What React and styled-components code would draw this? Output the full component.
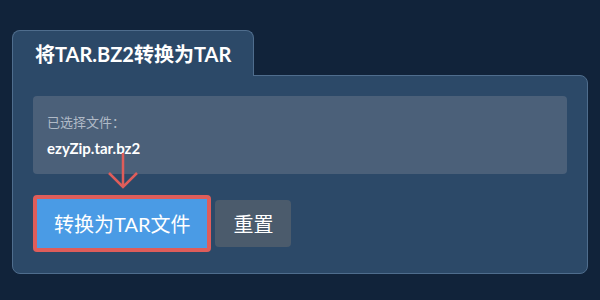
import styled, { createGlobalStyle } from 'styled-components';

const GlobalStyle = createGlobalStyle`
  html, body {
    margin: 0;
    padding: 0;
    background: #11233a;
  }
  body {
    font-family: Lato, "Noto Sans CJK SC", sans-serif;
    color: #ffffff;
  }
`

const Page = styled.div`
  padding: 30px 12px 0;
  min-height: 300px;
  box-sizing: border-box;
`

const Tab = styled.div`
  display: inline-flex;
  align-items: center;
  height: 46px;
  padding: 0 22px;
  box-sizing: border-box;
  background: #2c4968;
  border: 1px solid #4f6d8d;
  border-bottom: none;
  border-radius: 8px 8px 0 0;
  position: relative;
  z-index: 1;
  margin-bottom: -1px;
`

const Title = styled.h1`
  margin: 0;
  font-size: 20px;
  font-weight: 700;
  color: #ffffff;
`

const Panel = styled.div`
  display: flex;
  flex-direction: column;
  gap: 21px;
  padding: 20px 20px 21px;
  background: #2c4968;
  border: 1px solid #4f6d8d;
  border-radius: 0 8px 8px 8px;
`

const FileBox = styled.div`
  height: 78px;
  box-sizing: border-box;
  padding: 17px 14px 0;
  background: #4b6079;
  border-radius: 4px;
`

const FileLabel = styled.div`
  font-size: 13px;
  line-height: 18px;
  color: #b0bac7;
  margin-bottom: 7px;
`

const FileName = styled.div`
  font-size: 15px;
  line-height: 20px;
  font-weight: 700;
  color: #ffffff;
`

const ButtonRow = styled.div`
  position: relative;
  display: flex;
  align-items: center;
  gap: 4px;
`

const Button = styled.button`
  height: ${p => (p.$highlight ? '57px' : '47px')};
  box-sizing: border-box;
  padding: 0 ${p => (p.$highlight ? '17px' : '18px')};
  border: ${p => (p.$highlight ? '4px solid #df5d5a' : 'none')};
  border-radius: 4px;
  background: ${p => (p.$primary ? '#4a9be5' : '#4b5b6c')};
  color: #ffffff;
  font-family: Lato, "Noto Sans CJK SC", sans-serif;
  font-size: 20px;
  cursor: pointer;
`

const Arrow = styled.svg`
  position: absolute;
  left: 74px;
  top: -42px;
`

function App() {
  return (
    <Page>
      <GlobalStyle />
      <Tab>
        <Title>将TAR.BZ2转换为TAR</Title>
      </Tab>
      <Panel>
        <FileBox>
          <FileLabel>已选择文件：</FileLabel>
          <FileName>ezyZip.tar.bz2</FileName>
        </FileBox>
        <ButtonRow>
          <Arrow width="32" height="36" viewBox="0 0 32 36">
            <path d="M16 0 V34 M2 20 L16 34 L30 20" fill="none" stroke="#df5d5a" strokeWidth="2.5" />
          </Arrow>
          <Button $primary $highlight>转换为TAR文件</Button>
          <Button>重置</Button>
        </ButtonRow>
      </Panel>
    </Page>
  );
}

export default App;
